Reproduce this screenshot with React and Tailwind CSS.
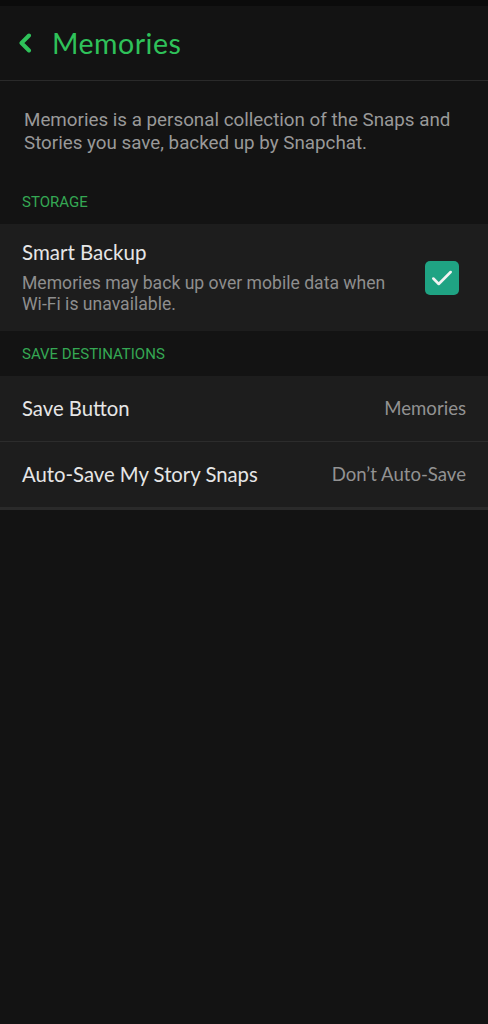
const rows = [
  { label: "Save Button", value: "Memories" },
  { label: "Auto-Save My Story Snaps", value: "Don’t Auto-Save" },
];

const App = () => {
  return (
    <div className="min-h-screen w-full bg-[#131313] flex flex-col font-['Roboto',sans-serif]">
      <div className="h-[6px] bg-[#0b0b0b]" />
      <div className="h-[75px] flex items-center pl-[17px] border-b border-[#2a2a2a]">
        <svg width="16" height="20" viewBox="0 0 16 20" fill="none" stroke="#2fc25a" strokeWidth="4" strokeLinecap="round" strokeLinejoin="round">
          <path d="M12 2.5L4.5 10l7.5 7.5" />
        </svg>
        <span className="ml-[19px] text-[28.5px] text-[#2fc25a] font-['Lato',sans-serif] tracking-[0.5px]">
          Memories
        </span>
      </div>

      <p className="px-[24px] pt-[28px] text-[18.8px] leading-[23px] text-[#999999]">
        Memories is a personal collection of the Snaps and Stories you save, backed up by Snapchat.
      </p>

      <div className="px-[22px] pt-[38px] pb-[13px] text-[15px] text-[#35a853] leading-[18px]">
        STORAGE
      </div>

      <div className="bg-[#1d1d1d] pl-[22px] pt-[16px] pb-[16px] flex items-center">
        <div className="w-[372px]">
          <div className="text-[20.5px] leading-[24px] text-[#e6e6e6] font-['Lato',sans-serif]">Smart Backup</div>
          <div className="mt-[9px] text-[17.6px] leading-[21px] text-[#8e8e8e]">
            Memories may back up over mobile data when Wi-Fi is unavailable.
          </div>
        </div>
        <div className="ml-[31px] w-[34px] h-[34px] rounded-[5px] bg-[#1fa383] flex items-center justify-center">
          <svg width="26" height="26" viewBox="0 0 24 24" fill="none" stroke="#f2f2f2" strokeWidth="2.4" strokeLinecap="round" strokeLinejoin="round">
            <path d="M4 12.5l5 5L20 6.5" />
          </svg>
        </div>
      </div>

      <div className="px-[22px] pt-[14px] pb-[13px] text-[15px] text-[#35a853] leading-[18px]">
        SAVE DESTINATIONS
      </div>

      <div className="bg-[#1d1d1d] border-b-[3px] border-[#2a2a2a]">
        {rows.map((row, i) => (
          <div
            key={row.label}
            className={`px-[22px] flex items-center justify-between ${i > 0 ? "h-[66px] border-t border-[#2c2c2c]" : "h-[65px]"}`}
          >
            <span className="text-[20.3px] text-[#e6e6e6] font-['Lato',sans-serif]">{row.label}</span>
            <span className="text-[18.6px] text-[#929292] font-['Lato',sans-serif]">{row.value}</span>
          </div>
        ))}
      </div>
    </div>
  );
};

export default App;
